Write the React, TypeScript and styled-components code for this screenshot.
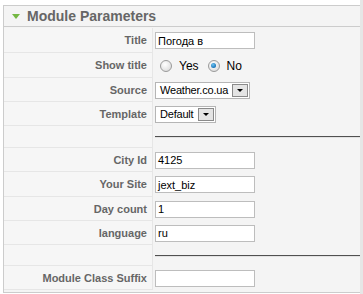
import { Fragment } from 'react'
import styled, { createGlobalStyle } from 'styled-components'

const GlobalStyle = createGlobalStyle`
  html, body {
    margin: 0;
    padding: 0;
    background: #ffffff;
  }
  body {
    font-family: "Liberation Sans", Arial, sans-serif;
    font-size: 11px;
  }
`

const Page = styled.div`
  display: flex;
  width: 363px;
  height: 294px;
  overflow: hidden;
`

const Content = styled.div`
  flex: 1;
  padding: 5px 0 0 3px;
`

const EdgeStrip = styled.div`
  width: 3px;
  background: #e6e6e6;
`

const Panel = styled.div`
  border: 1px solid #cccccc;
  border-right: none;
  background: #f4f4f4;
  padding-bottom: 2px;
`

const PanelHeader = styled.div`
  display: flex;
  align-items: center;
  gap: 7px;
  height: 20px;
  padding-left: 8px;
  border-bottom: 1px solid #cccccc;
  font-size: 14px;
  font-weight: bold;
  color: #666666;
`

const Arrow = styled.span`
  width: 0;
  height: 0;
  margin-top: 1px;
  border-left: 4px solid transparent;
  border-right: 4px solid transparent;
  border-top: 5px solid #74b843;
`

const ParamGrid = styled.div`
  display: grid;
  grid-template-columns: 149px 1fr;
  padding-top: 1px;
`

const Key = styled.div<{ $h: number }>`
  height: ${p => p.$h - 1}px;
  display: flex;
  align-items: center;
  justify-content: flex-end;
  padding-right: 5px;
  background: #f6f6f6;
  border-bottom: 1px solid #e6e6e6;
  border-right: 1px solid #e6e6e6;
  font-weight: bold;
  color: #666666;
  white-space: nowrap;
`

const Value = styled.div`
  display: flex;
  align-items: center;
  padding-left: 2px;
`

const TextBox = styled.div`
  box-sizing: border-box;
  width: 100px;
  height: 17px;
  padding: 0 2px;
  display: flex;
  align-items: center;
  background: #ffffff;
  border: 1px solid #bdbdbd;
  color: #000000;
  font-size: 11px;
`

const SelectBox = styled.div<{ $w: number }>`
  box-sizing: border-box;
  width: ${p => p.$w}px;
  height: 17px;
  display: flex;
  align-items: center;
  justify-content: space-between;
  padding: 0 1px 0 4px;
  background: #ffffff;
  border: 1px solid #b5b5b5;
  color: #000000;
  letter-spacing: -0.2px;
`

const DropButton = styled.span`
  box-sizing: border-box;
  width: 16px;
  height: 13px;
  display: flex;
  align-items: center;
  justify-content: center;
  background: #e4e4e4;
  border: 1px solid #8a8a8a;
  &::after {
    content: '';
    border-left: 3px solid transparent;
    border-right: 3px solid transparent;
    border-top: 3px solid #000000;
  }
`

const RadioGroup = styled.div`
  display: flex;
  align-items: center;
  color: #000000;
  font-size: 12px;
`

const Radio = styled.span<{ $gap: number }>`
  box-sizing: border-box;
  width: 12px;
  height: 12px;
  border-radius: 50%;
  margin: 0 7px 0 ${p => p.$gap}px;
  border: 1px solid #9a9a9a;
  background: radial-gradient(circle at 40% 35%, #ffffff 0%, #e6e6e6 60%, #cfcfcf 100%);
  display: flex;
  align-items: center;
  justify-content: center;
`

const RadioDot = styled.span`
  width: 5px;
  height: 5px;
  border-radius: 50%;
  background: radial-gradient(circle at 40% 35%, #6ec3f2 0%, #1874b8 70%, #0d4f86 100%);
`

const Rule = styled.div`
  flex: 1;
  height: 0;
  border-top: 1px solid #505050;
  border-bottom: 1px solid #e2e2e2;
`

type Row =
  | { kind: 'text'; label: string; value: string; h: number }
  | { kind: 'radio'; label: string; h: number }
  | { kind: 'select'; label: string; value: string; width: number; h: number }
  | { kind: 'rule'; h: number }

const rows: Row[] = [
  { kind: 'text', label: 'Title', value: 'Погода в', h: 25 },
  { kind: 'radio', label: 'Show title', h: 25 },
  { kind: 'select', label: 'Source', value: 'Weather.co.ua', width: 95, h: 24 },
  { kind: 'select', label: 'Template', value: 'Default', width: 61, h: 24 },
  { kind: 'rule', h: 22 },
  { kind: 'text', label: 'City Id', value: '4125', h: 24 },
  { kind: 'text', label: 'Your Site', value: 'jext_biz', h: 25 },
  { kind: 'text', label: 'Day count', value: '1', h: 24 },
  { kind: 'text', label: 'language', value: 'ru', h: 24 },
  { kind: 'rule', h: 21 },
  { kind: 'text', label: 'Module Class Suffix', value: '', h: 24 },
]

const renderValue = (row: Row) => {
  switch (row.kind) {
    case 'text':
      return <TextBox>{row.value}</TextBox>
    case 'radio':
      return (
        <RadioGroup>
          <Radio $gap={5} />Yes
          <Radio $gap={9}><RadioDot /></Radio>No
        </RadioGroup>
      )
    case 'select':
      return (
        <SelectBox $w={row.width}>
          {row.value}
          <DropButton />
        </SelectBox>
      )
    case 'rule':
      return <Rule />
  }
}

export default function App() {
  return (
    <Page>
      <GlobalStyle />
      <Content>
        <Panel>
          <PanelHeader>
            <Arrow />
            Module Parameters
          </PanelHeader>
          <ParamGrid>
            {rows.map((row, i) => (
              <Fragment key={i}>
                <Key $h={row.h}>{row.kind === 'rule' ? '' : row.label}</Key>
                <Value>{renderValue(row)}</Value>
              </Fragment>
            ))}
          </ParamGrid>
        </Panel>
      </Content>
      <EdgeStrip />
    </Page>
  )
}
